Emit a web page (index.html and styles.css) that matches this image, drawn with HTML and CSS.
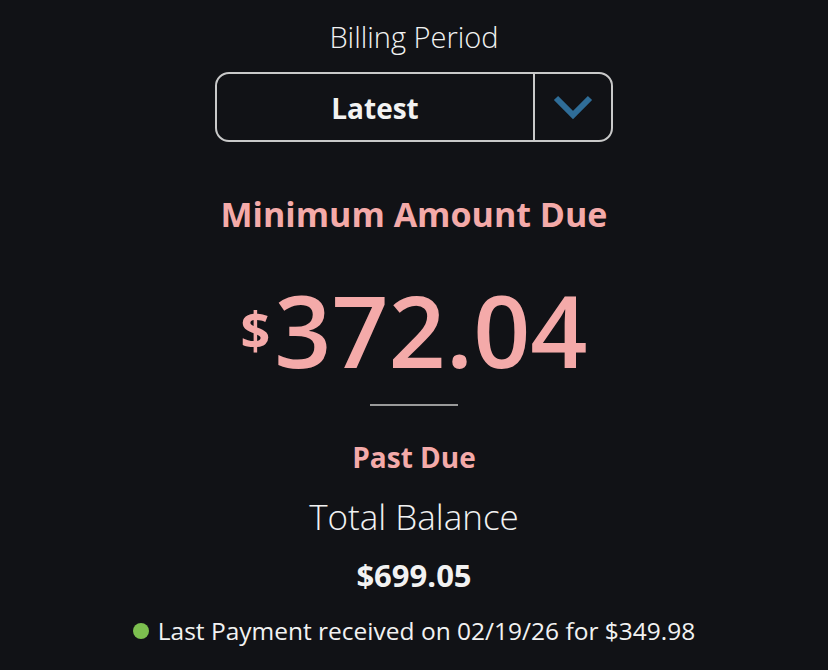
FILE: index.html
```html
<!DOCTYPE html>
<html lang="en">
<head>
    <meta charset="UTF-8">
    <meta name="viewport" content="width=device-width, initial-scale=1.0">
    <title>Billing Summary</title>
    <link rel="stylesheet" href="styles.css">
</head>
<body>
    <main class="billing">
        <div class="period-label">Billing Period</div>
        <div class="period-select">
            <span class="period-value">Latest</span>
            <span class="period-toggle">
                <svg width="40" height="26" viewBox="0 0 40 26">
                    <polyline points="3,4 20,21 37,4" fill="none" stroke="#2f6d98" stroke-width="6"/>
                </svg>
            </span>
        </div>

        <h2 class="due-title">Minimum Amount Due</h2>
        <div class="due-amount"><span class="currency">$</span>372.04</div>
        <hr class="divider">

        <div class="past-due">Past Due</div>
        <div class="balance-label">Total Balance</div>
        <div class="balance-amount">$699.05</div>

        <p class="last-payment"><span class="dot"></span>Last Payment received on 02/19/26 for $349.98</p>
    </main>
</body>
</html>
```

FILE: styles.css
```css
body {
    margin: 0;
    background-color: #111216;
    color: #f2f2f2;
    font-family: "Open Sans", "Noto Sans", sans-serif;
    line-height: normal;
}
.billing {
    display: flex;
    flex-direction: column;
    align-items: center;
    text-align: center;
    padding-top: 17px;
}
.period-label {
    font-size: 29px;
    font-weight: 300;
}
.period-select {
    display: flex;
    width: 394px;
    height: 66px;
    margin-top: 16px;
    border: 2px solid #c9c9c9;
    border-radius: 14px;
}
.period-value {
    flex: 1;
    display: flex;
    align-items: center;
    justify-content: center;
    padding-top: 2px;
    font-size: 28px;
    font-weight: 700;
    border-right: 2px solid #c9c9c9;
}
.period-toggle {
    width: 76px;
    display: flex;
    align-items: center;
    justify-content: center;
}
.due-title {
    margin: 49px 0 0;
    font-size: 34px;
    font-weight: 700;
    color: #f4aaa9;
}
.due-amount {
    margin-top: 42px;
    font-size: 100px;
    font-weight: 600;
    line-height: 100px;
    color: #f4aaa9;
    display: flex;
    align-items: flex-start;
}
.currency {
    font-size: 52px;
    font-weight: 700;
    line-height: 52px;
    margin-top: 25px;
    margin-right: 4px;
}
.divider {
    width: 88px;
    margin: 25px 0 0;
    border: 0;
    border-top: 2px solid #9a9a9a;
}
.past-due {
    margin-top: 32px;
    font-size: 28px;
    font-weight: 700;
    color: #f4aaa9;
}
.balance-label {
    margin-top: 17px;
    font-size: 35px;
    font-weight: 300;
}
.balance-amount {
    margin-top: 14px;
    font-size: 31px;
    font-weight: 700;
}
.last-payment {
    margin: 18px 0 0;
    font-size: 24.5px;
    display: flex;
    align-items: center;
}
.dot {
    width: 16px;
    height: 16px;
    border-radius: 50%;
    background: #7cbf4f;
    margin-right: 9px;
}
```
